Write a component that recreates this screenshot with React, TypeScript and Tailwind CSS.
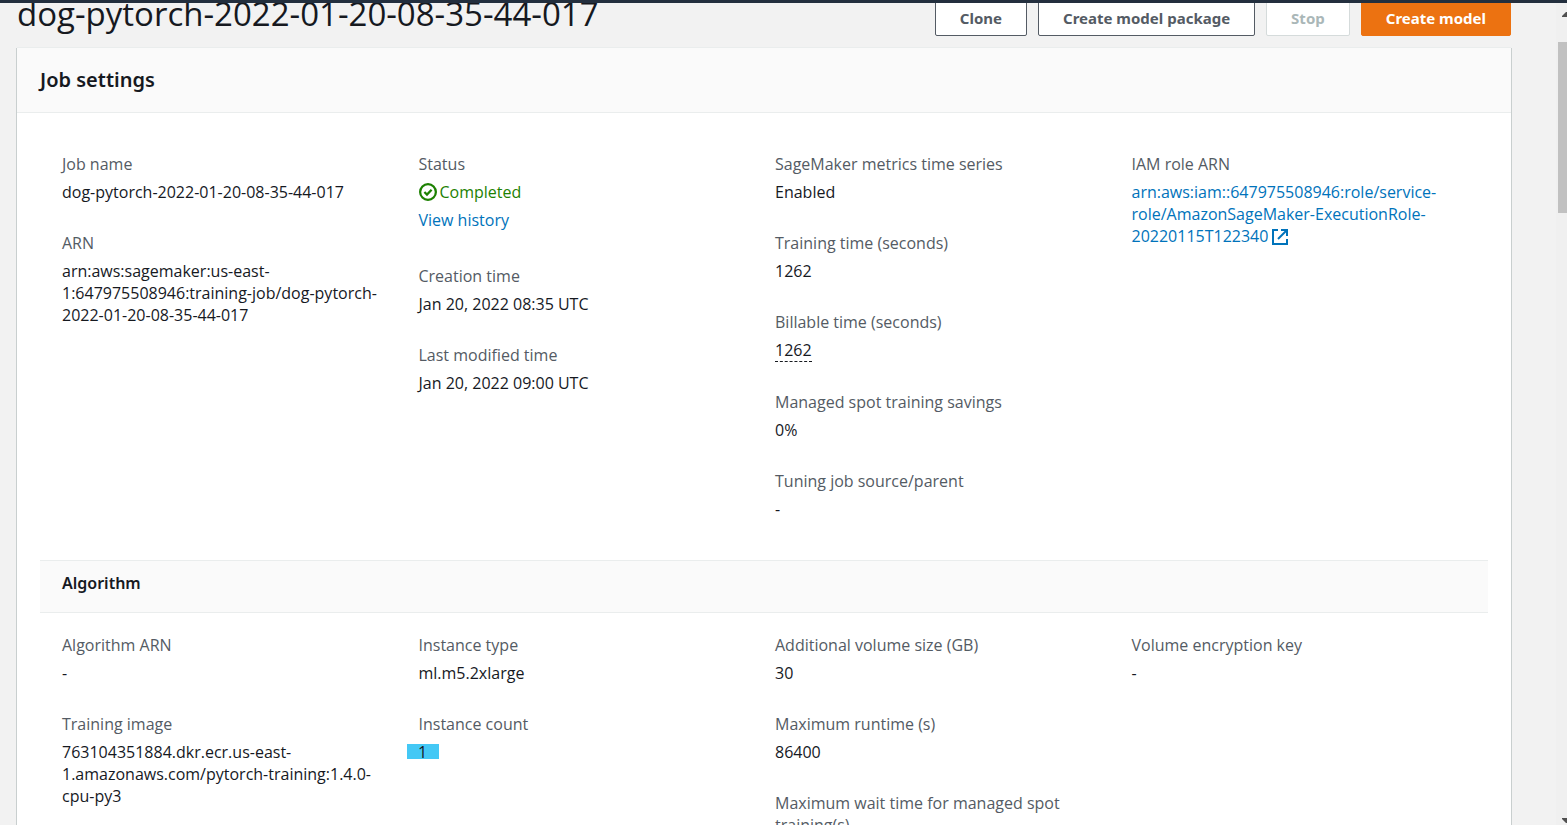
import type { ReactNode } from "react";

type FieldProps = { label: string; children: ReactNode };

function Field({ label, children }: FieldProps) {
  return (
    <div>
      <dt className="text-[#545b64]">{label}</dt>
      <dd className="mt-1.5">{children}</dd>
    </div>
  );
}

function Column({ children }: { children: ReactNode }) {
  return <dl className="flex min-w-0 flex-col gap-[29px] pr-8 font-['Open_Sans',sans-serif]">{children}</dl>;
}

function CheckCircle() {
  return (
    <svg viewBox="0 0 16 16" className="size-[18px] shrink-0" fill="none" stroke="currentColor" strokeWidth="2" aria-hidden="true">
      <circle cx="8" cy="8" r="7" />
      <path d="M4.8 8l2.3 2.3 4.1-4.3" />
    </svg>
  );
}

function ExternalIcon() {
  return (
    <svg viewBox="0 0 16 16" className="ml-1 inline-block size-4 align-[-3px]" fill="none" stroke="currentColor" strokeWidth="2" aria-hidden="true">
      <path d="M6 1H1v14h14v-5" />
      <path d="M9 1h6v6" />
      <path d="M15 1L6 10" />
    </svg>
  );
}

const buttonBase = "h-9 rounded-[2px] border px-6 text-[15px] font-bold leading-[22px]";

export default function App() {
  return (
    <div className="flex h-screen flex-col overflow-hidden bg-[#f2f2f2] font-['Noto_Sans',sans-serif] text-base leading-[22px] text-[#16191f]">
      <div className="h-[3px] shrink-0 bg-[#232f3e]" />
      <div className="flex min-h-0 flex-1">
        <main className="min-w-0 flex-1 overflow-hidden pl-[17px] pr-[45px]">
          <header className="-mt-3 flex items-end justify-between pb-[11px]">
            <h1 className="font-['Open_Sans',sans-serif] text-[33px] leading-[45px]">dog-pytorch-2022-01-20-08-35-44-017</h1>
            <div className="flex gap-[11px]">
              <button type="button" className={`${buttonBase} border-[#545b64] bg-white text-[#545b64]`}>Clone</button>
              <button type="button" className={`${buttonBase} border-[#545b64] bg-white text-[#545b64]`}>Create model package</button>
              <button type="button" disabled className={`${buttonBase} border-[#d5dbdb] bg-white text-[#aab7b8]`}>Stop</button>
              <button type="button" className={`${buttonBase} border-[#ec7211] bg-[#ec7211] text-white`}>Create model</button>
            </div>
          </header>

          <section className="bg-white shadow-[1px_1px_0_0_#c9cfcf,-1px_1px_0_0_#c9cfcf]">
            <div className="border-y border-[#eaeded] bg-[#fafafa] px-[23px] py-[18px]">
              <h2 className="text-xl font-semibold leading-7">Job settings</h2>
            </div>
            <div className="px-[23px] pt-10">
              <div className="grid grid-cols-4 pl-[22px]">
                <Column>
                  <Field label="Job name">dog-pytorch-2022-01-20-08-35-44-017</Field>
                  <Field label="ARN">arn:aws:sagemaker:us-east-1:647975508946:training-job/dog-pytorch-2022-01-20-08-35-44-017</Field>
                </Column>
                <Column>
                  <Field label="Status">
                    <span className="flex items-center gap-[3px] text-[#1d8102]">
                      <CheckCircle />
                      Completed
                    </span>
                    <a href="#history" className="mb-[5px] mt-1.5 block text-[#0073bb]">View history</a>
                  </Field>
                  <Field label="Creation time">Jan 20, 2022 08:35 UTC</Field>
                  <Field label="Last modified time">Jan 20, 2022 09:00 UTC</Field>
                </Column>
                <Column>
                  <Field label="SageMaker metrics time series">Enabled</Field>
                  <Field label="Training time (seconds)">1262</Field>
                  <Field label="Billable time (seconds)">
                    <span className="inline-block border-b border-dashed border-[#16191f]">1262</span>
                  </Field>
                  <Field label="Managed spot training savings">0%</Field>
                  <Field label="Tuning job source/parent">-</Field>
                </Column>
                <Column>
                  <Field label="IAM role ARN">
                    <a href="#role" className="text-[#0073bb]">
                      arn:aws:iam::647975508946:role/service-role/AmazonSageMaker-ExecutionRole-20220115T122340
                      <ExternalIcon />
                    </a>
                  </Field>
                </Column>
              </div>

              <div className="mt-10 border-y border-[#eaeded] bg-[#fafafa] px-[22px] pb-[18px] pt-[11px]">
                <h3 className="font-semibold">Algorithm</h3>
              </div>
              <div className="grid grid-cols-4 pl-[22px] pt-[21px]">
                <Column>
                  <Field label="Algorithm ARN">-</Field>
                  <Field label="Training image">763104351884.dkr.ecr.us-east-1.amazonaws.com/pytorch-training:1.4.0-cpu-py3</Field>
                </Column>
                <Column>
                  <Field label="Instance type">ml.m5.2xlarge</Field>
                  <Field label="Instance count">
                    <mark className="-ml-3 mt-[9px] block h-[15px] w-8 bg-[#44c8f5] text-center leading-[17px] text-[#16191f]">1</mark>
                  </Field>
                </Column>
                <Column>
                  <Field label="Additional volume size (GB)">30</Field>
                  <Field label="Maximum runtime (s)">86400</Field>
                  <Field label="Maximum wait time for managed spot training(s)">-</Field>
                </Column>
                <Column>
                  <Field label="Volume encryption key">-</Field>
                </Column>
              </div>
            </div>
          </section>
        </main>

        <div className="flex w-[11px] shrink-0 flex-col items-end justify-between overflow-hidden bg-[#f0f0f0]" aria-hidden="true">
          <svg viewBox="0 0 5 5" className="mt-[9px] h-[5px] w-[5px]" fill="#505050"><path d="M0 5V4L4 0H5V5Z" /></svg>
          <div className="mb-auto mt-[25px] h-[171px] w-[9px] bg-[#c1c1c1]" />
          <svg viewBox="0 0 5 5" className="mb-[2px] h-[5px] w-[5px]" fill="#505050"><path d="M0 0V1L4 5H5V0Z" /></svg>
        </div>
      </div>
    </div>
  );
}
